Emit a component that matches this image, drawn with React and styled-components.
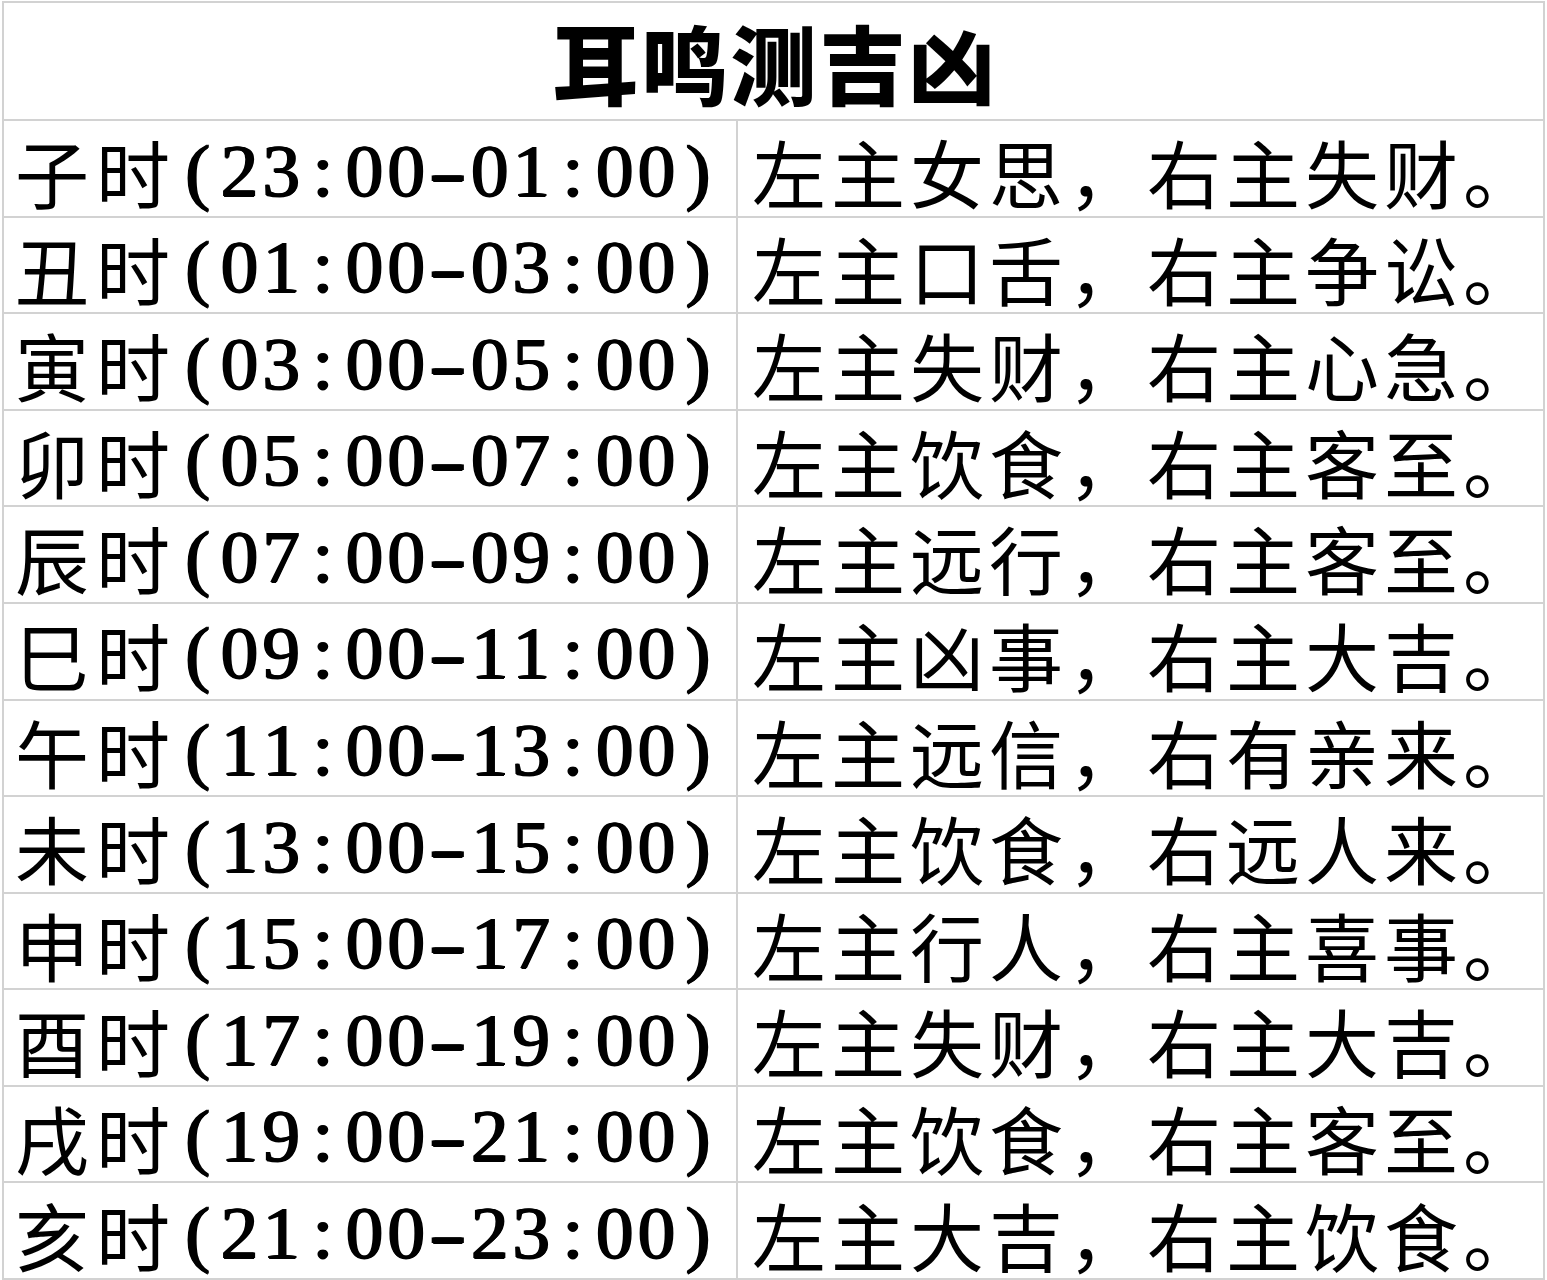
import React from "react";
import styled, { createGlobalStyle } from "styled-components";

const Global = createGlobalStyle`
  html, body { margin: 0; padding: 0; background: #fff; }
  body { width: 1547px; height: 1280px; overflow: hidden; }
`;

const LINE = "#d2d2d2";

const Page = styled.div`
  width: 1547px;
  height: 1280px;
  box-sizing: border-box;
  padding: 1px 2px 0 2px;
  background: #fff;
`;

const Sheet = styled.div`
  height: 100%;
  box-sizing: border-box;
  border-left: 2px solid ${LINE};
  border-top: 2px solid ${LINE};
  display: grid;
  grid-template-columns: 734px minmax(0, 1fr);
  grid-template-rows: 118px repeat(12, minmax(0, 1fr));
`;

const Cell = styled.div`
  box-sizing: border-box;
  min-width: 0;
  min-height: 0;
  border-right: 2px solid ${LINE};
  border-bottom: 2px solid ${LINE};
  display: flex;
  align-items: center;
  padding: ${(p) => p.$top ?? 5}px 0 0 ${(p) => p.$pad ?? 0}px;
  white-space: nowrap;
  font-family: "Noto Sans CJK SC", sans-serif;
  font-size: 74px;
  line-height: 1.1;
  color: #000;
`;

const TitleCell = styled(Cell)`
  grid-column: 1 / -1;
  justify-content: center;
  font-size: 86px;
  font-weight: 900;
  letter-spacing: 3px;
  padding-left: 3px;
  padding-top: 2px;
`;

const Han = styled.span`
  letter-spacing: ${(p) => p.$gap ?? 7}px;
`;

const Glyph = styled.span`
  display: inline-block;
  width: 41.7px;
  text-align: center;
  font-family: "Liberation Serif", "Times New Roman", serif;
  font-size: 75px;
  font-weight: 400;
  text-shadow: 1px 0 0 #000, -1px 0 0 #000, 0 0.6px 0 #000;
  line-height: 1.1;
  transform: ${(p) => (p.$wide ? "scaleX(1.5)" : "none")};
`;

const rows = [
  ["子时", "23:00-01:00", "左主女思，右主失财。"],
  ["丑时", "01:00-03:00", "左主口舌，右主争讼。"],
  ["寅时", "03:00-05:00", "左主失财，右主心急。"],
  ["卯时", "05:00-07:00", "左主饮食，右主客至。"],
  ["辰时", "07:00-09:00", "左主远行，右主客至。"],
  ["巳时", "09:00-11:00", "左主凶事，右主大吉。"],
  ["午时", "11:00-13:00", "左主远信，右有亲来。"],
  ["未时", "13:00-15:00", "左主饮食，右远人来。"],
  ["申时", "15:00-17:00", "左主行人，右主喜事。"],
  ["酉时", "17:00-19:00", "左主失财，右主大吉。"],
  ["戌时", "19:00-21:00", "左主饮食，右主客至。"],
  ["亥时", "21:00-23:00", "左主大吉，右主饮食。"],
];

function TimeText({ text }) {
  const chars = ("(" + text + ")").split("");
  return (
    <>
      {chars.map((c, i) => (
        <Glyph key={i} $wide={c === "-"}>
          {c}
        </Glyph>
      ))}
    </>
  );
}

export default function App() {
  return (
    <Page>
      <Global />
      <Sheet>
        <TitleCell>耳鸣测吉凶</TitleCell>
        {rows.map(([hour, time, text]) => (
          <React.Fragment key={hour}>
            <Cell $pad={11}>
              <Han $gap={7}>{hour}</Han>
              <TimeText text={time} />
            </Cell>
            <Cell $pad={14}>
              <Han $gap={5}>{text}</Han>
            </Cell>
          </React.Fragment>
        ))}
      </Sheet>
    </Page>
  );
}
